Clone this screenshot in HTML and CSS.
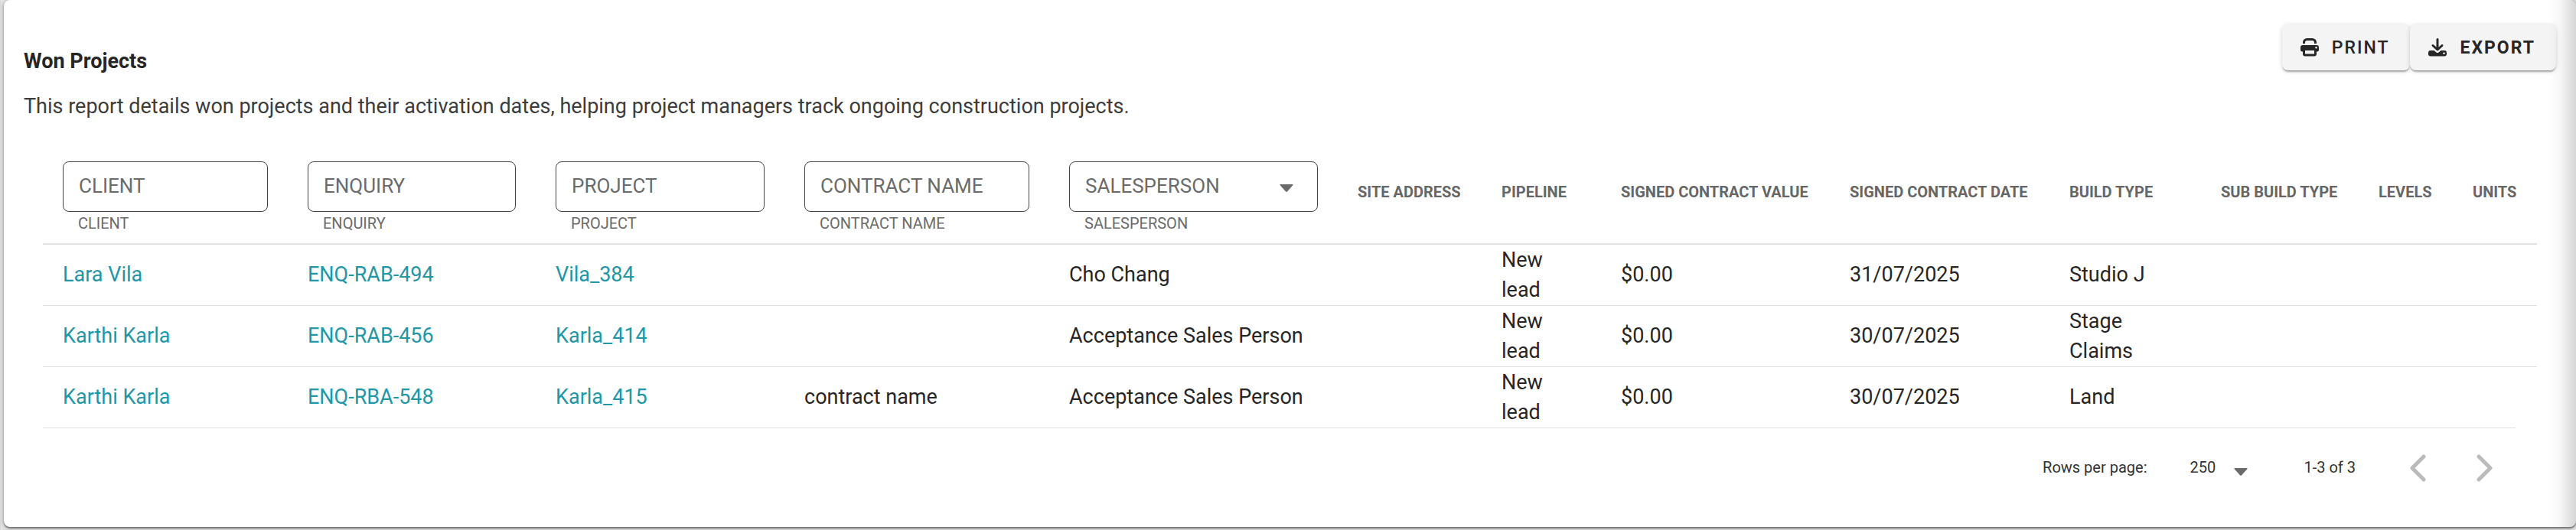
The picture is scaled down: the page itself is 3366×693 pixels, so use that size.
FILE: index.html
```html
<!DOCTYPE html>
<html lang="en">
<head>
<meta charset="utf-8">
<title>Won Projects</title>
<link rel="stylesheet" href="styles.css">
</head>
<body>
<main class="card">
  <header class="card-head">
    <div class="intro">
      <h1 class="title">Won Projects</h1>
      <p class="desc">This report details won projects and their activation dates, helping project managers track ongoing construction projects.</p>
    </div>
    <div class="actions">
      <button class="btn" type="button">
        <svg class="btn-icon" viewBox="0 0 24 24" aria-hidden="true"><path d="M4.500 7V5.500a4 4 0 0 1 4-4h7a4 4 0 0 1 4 4V7" fill="none" stroke="currentColor" stroke-width="3"/><path fill="currentColor" fill-rule="evenodd" d="M3 9h18a3 3 0 0 1 3 3v3a2.500 2.500 0 0 1-2.500 2.500H21v3a3 3 0 0 1-3 3H6a3 3 0 0 1-3-3v-3h-.5A2.500 2.500 0 0 1 0 15v-3a3 3 0 0 1 3-3zm3 7v4.500h12V16zM20.500 11a1.300 1.300 0 1 0 0 2.600 1.300 1.300 0 0 0 0-2.600z"/></svg>
        Print
      </button>
      <button class="btn btn-strong" type="button">
        <svg class="btn-icon" viewBox="0 0 24 24" aria-hidden="true"><path d="M12 1.500v13M6 9.500l6 5.500 6-5.500" fill="none" stroke="currentColor" stroke-width="3" stroke-linecap="round" stroke-linejoin="round"/><path fill="currentColor" fill-rule="evenodd" d="M3 16h4.500l3 2.400a2.500 2.500 0 0 0 3 0l3-2.400H21a3 3 0 0 1 3 3v1.500a3 3 0 0 1-3 3H3a3 3 0 0 1-3-3V19a3 3 0 0 1 3-3zm17.500 2.500a1.300 1.300 0 1 0 0 2.600 1.300 1.300 0 0 0 0-2.600z"/></svg>
        Export
      </button>
    </div>
  </header>
  <section class="report">
    <table class="grid">
      <colgroup>
        <col class="c-client"><col class="c-enquiry"><col class="c-project"><col class="c-contract"><col class="c-sales"><col class="c-site"><col class="c-pipeline"><col class="c-value"><col class="c-date"><col class="c-build"><col class="c-sub"><col class="c-levels"><col class="c-units">
      </colgroup>
      <thead>
        <tr>
          <th><div class="field"><input class="box" id="f-client" type="text" placeholder="CLIENT"><label class="hint" for="f-client">CLIENT</label></div></th>
          <th><div class="field"><input class="box" id="f-enquiry" type="text" placeholder="ENQUIRY"><label class="hint" for="f-enquiry">ENQUIRY</label></div></th>
          <th><div class="field"><input class="box" id="f-project" type="text" placeholder="PROJECT"><label class="hint" for="f-project">PROJECT</label></div></th>
          <th><div class="field"><input class="box" id="f-contract" type="text" placeholder="CONTRACT NAME"><label class="hint" for="f-contract">CONTRACT NAME</label></div></th>
          <th><div class="field"><span class="select"><select class="box" id="f-sales"><option>SALESPERSON</option></select><svg class="caret" viewBox="0 0 18 10" aria-hidden="true"><path d="M1 0h16q1 0 .5 1L10 9.500q-1 .8-2 0L.5 1Q0 0 1 0z"/></svg></span><label class="hint" for="f-sales">SALESPERSON</label></div></th>
          <th>SITE ADDRESS</th>
          <th>PIPELINE</th>
          <th>SIGNED CONTRACT VALUE</th>
          <th>SIGNED CONTRACT DATE</th>
          <th>BUILD TYPE</th>
          <th>SUB BUILD TYPE</th>
          <th>LEVELS</th>
          <th>UNITS</th>
        </tr>
      </thead>
      <tbody>
        <tr>
          <td><a href="#">Lara Vila</a></td><td><a href="#">ENQ-RAB-494</a></td><td><a href="#">Vila_384</a></td><td></td><td>Cho Chang</td><td></td><td>New lead</td><td>$0.00</td><td>31/07/2025</td><td>Studio J</td><td></td><td></td><td></td>
        </tr>
        <tr>
          <td><a href="#">Karthi Karla</a></td><td><a href="#">ENQ-RAB-456</a></td><td><a href="#">Karla_414</a></td><td></td><td>Acceptance Sales Person</td><td></td><td>New lead</td><td>$0.00</td><td>30/07/2025</td><td>Stage Claims</td><td></td><td></td><td></td>
        </tr>
        <tr>
          <td><a href="#">Karthi Karla</a></td><td><a href="#">ENQ-RBA-548</a></td><td><a href="#">Karla_415</a></td><td>contract name</td><td>Acceptance Sales Person</td><td></td><td>New lead</td><td>$0.00</td><td>30/07/2025</td><td>Land</td><td></td><td></td><td></td>
        </tr>
      </tbody>
    </table>
    <footer class="pager">
      <label for="rows">Rows per page:</label>
      <span class="select rows"><select class="rows-select" id="rows"><option>250</option></select><svg class="caret caret-low" viewBox="0 0 18 10" aria-hidden="true"><path d="M1 0h16q1 0 .5 1L10 9.500q-1 .8-2 0L.5 1Q0 0 1 0z"/></svg></span>
      <span class="range">1-3 of 3</span>
      <button class="nav" type="button" aria-label="Previous page" disabled><svg viewBox="0 0 24 36" aria-hidden="true"><path d="M20 3L5 18l15 15"/></svg></button>
      <button class="nav" type="button" aria-label="Next page" disabled><svg viewBox="0 0 24 36" aria-hidden="true"><path d="M4 3l15 15L4 33"/></svg></button>
    </footer>
  </section>
</main>
</body>
</html>
```
FILE: styles.css
```css
* { box-sizing: border-box; }

body {
  margin: 0;
  padding: 0 0 6px 4px;
  background: #e4e4e4;
  border-left: 1px solid #d8d8d8;
  font-family: Roboto, "Liberation Sans", sans-serif;
  font-size: 27px;
  line-height: 39px;
  color: #262626;
  overflow-x: hidden;
}

button, input, select { font: inherit; color: inherit; }

.card {
  position: relative;
  padding: 32px 26px 26px;
  background: #fff;
  border-radius: 8px;
  box-shadow: 0 1px 4px 1px rgba(0, 0, 0, .3), 0 2px 1px rgba(0, 0, 0, .3);
}

.card::after {
  content: "";
  position: absolute;
  inset: 0 0 0 auto;
  width: 36px;
  border-radius: 0 8px 8px 0;
  background: linear-gradient(to right, rgba(0, 0, 0, 0), rgba(0, 0, 0, .03) 40%, rgba(0, 0, 0, .16));
  pointer-events: none;
}

.card-head {
  display: flex;
  justify-content: space-between;
  align-items: flex-start;
}

.intro { padding-top: 28px; }

.title {
  margin: 0 0 19px;
  font-size: 27px;
  line-height: 40px;
  font-weight: 700;
}

.desc { margin: 0; line-height: 40px; color: #3c3c3c; }

.actions { display: flex; }

.btn {
  display: flex;
  align-items: center;
  gap: 17px;
  height: 60px;
  padding: 0 27px 0 24px;
  border: 0;
  border-radius: 8px;
  background: #f4f4f4;
  font-size: 23px;
  font-weight: 500;
  letter-spacing: 2px;
  text-transform: uppercase;
  box-shadow: 0 3px 2px -1px rgba(0, 0, 0, .3), 0 1px 6px rgba(0, 0, 0, .16);
}

.btn-strong { font-weight: 700; }

.btn-icon { width: 24px; height: 24px; }

.report { padding: 28px 53px 0 25px; }

.grid {
  width: calc(100% + 28px);
  table-layout: fixed;
  border-collapse: separate;
  border-spacing: 0;
}

.c-client { width: 320px; }
.c-enquiry { width: 324px; }
.c-project { width: 325px; }
.c-contract { width: 346px; }
.c-sales { width: 377px; }
.c-site { width: 188px; }
.c-pipeline { width: 156px; }
.c-value { width: 299px; }
.c-date { width: 287px; }
.c-build { width: 198px; }
.c-sub { width: 206px; }
.c-levels { width: 123px; }
.c-units { width: 110px; }

.grid th {
  padding: 0 26px 4px;
  height: 133px;
  border-bottom: 2px solid #e2e2e2;
  text-align: left;
  vertical-align: middle;
  font-size: 20px;
  line-height: 28px;
  font-weight: 700;
  color: #666;
  white-space: nowrap;
}

.grid td {
  padding: 0 26px;
  height: 80px;
  border-bottom: 1px solid #e0e0e0;
}

.grid tbody tr:last-child td { height: 79px; border-bottom: 0; }

.grid a { color: #2196a6; text-decoration: none; }

.field { display: flex; flex-direction: column; padding-top: 16px; }

.box {
  width: 100%;
  height: 66px;
  padding: 0 20px 2px;
  border: 1px solid #444;
  border-radius: 8px;
  background: transparent;
  font-size: 26px;
  font-weight: 400;
  color: #6b6b6b;
  appearance: none;
}

.box::placeholder { color: #6b6b6b; opacity: 1; }

.hint { padding: 1px 20px 0; font-weight: 400; color: #6b6b6b; }

.select { position: relative; display: block; }

.caret {
  position: absolute;
  right: 32px;
  top: 30px;
  width: 18px;
  height: 10px;
  fill: #6b6b6b;
  pointer-events: none;
}

.pager {
  display: flex;
  align-items: center;
  justify-content: flex-end;
  height: 104px;
  padding-right: 20px;
  border-top: 1px solid #e0e0e0;
  font-size: 20px;
  color: #333;
}

.rows { width: 76px; margin: 0 73px 0 56px; }

.rows-select {
  width: 100%;
  height: 40px;
  padding: 0;
  border: 0;
  background: transparent;
  appearance: none;
}

.caret-low { right: 0; top: 20px; }

.range { margin-right: 61px; }

.nav {
  display: flex;
  align-items: center;
  justify-content: center;
  width: 40px;
  height: 40px;
  padding: 0;
  border: 0;
  background: transparent;
}

.nav + .nav { margin-left: 48px; }

.nav svg {
  width: 24px;
  height: 36px;
  fill: none;
  stroke: #bbb;
  stroke-width: 5;
  stroke-linecap: round;
  stroke-linejoin: round;
}
```
